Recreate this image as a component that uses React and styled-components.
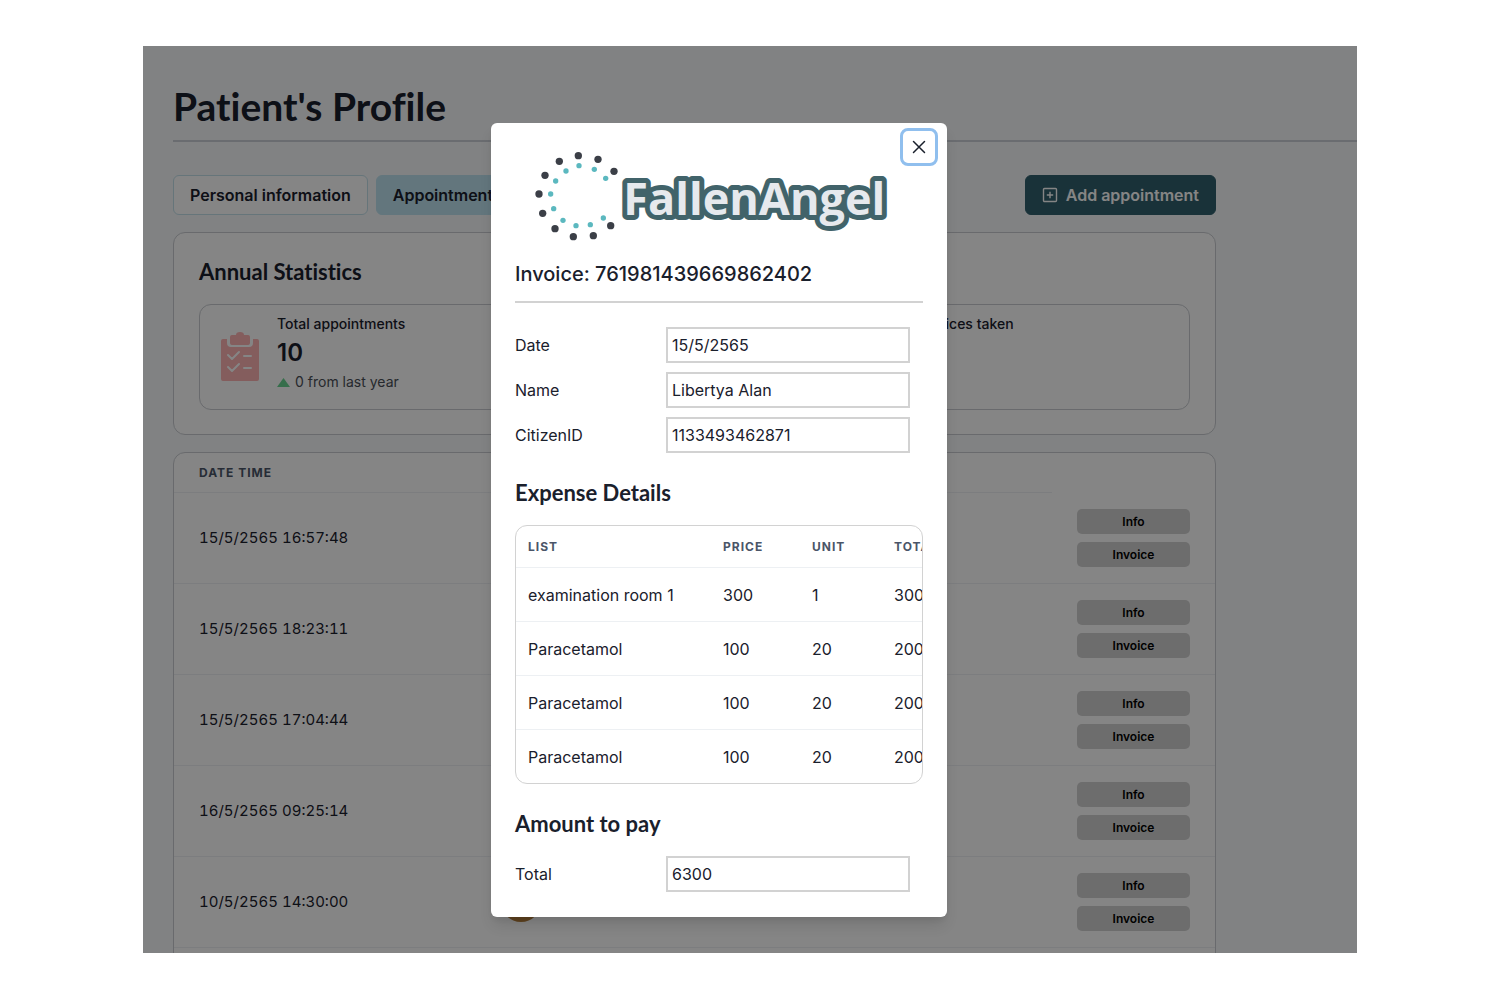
import React from "react";
import styled, { createGlobalStyle } from "styled-components";

const sans = `Inter, "Liberation Sans", sans-serif`;
const display = `Lato, "Noto Sans", sans-serif`;

const GlobalStyle = createGlobalStyle`
  *, *::before, *::after { box-sizing: border-box; }
  body { margin: 0; background: #fff; color: #1a202c; font-family: ${sans}; font-size: 16px; line-height: 24px; }
  h1, h2, p { margin: 0; }
  button, input { font: inherit; color: inherit; }
`;

const Stage = styled.div`
  height: 100vh;
  padding: 46px 143px 47px;
  display: flex;
`;

const Frame = styled.div`
  position: relative;
  flex: 1;
  overflow: hidden;
  background: #f7fafc;
`;

const Page = styled.main`
  padding: 30px 0 0 30px;
`;

const Title = styled.h1`
  font: 700 39px/60px ${display};
  font-variant-ligatures: none;
  padding-bottom: 4px;
  border-bottom: 2px solid #cbd0d6;
`;

const Content = styled.div`
  margin-right: 141px;
  padding-top: 33px;
  display: flex;
  flex-direction: column;
  gap: 17px;
`;

const Toolbar = styled.div`
  display: flex;
  gap: 8px;
`;

const ToolButton = styled.button`
  height: 40px;
  padding: 0 16px;
  display: flex;
  align-items: center;
  gap: 8px;
  border: 1px solid ${(p) => p.$border};
  border-radius: 6px;
  background: ${(p) => p.$fill};
  color: ${(p) => p.$ink || "#1a202c"};
  font-weight: 600;
  margin-left: ${(p) => (p.$end ? "auto" : 0)};
`;

const Card = styled.section`
  border: 1px solid #c9ccd1;
  border-radius: 12px;
  background: #fff;
`;

const StatsCard = styled(Card)`
  padding: 23px 25px 24px;
`;

const SectionTitle = styled.h2`
  font: 700 22px/32px ${display};
  font-variant-ligatures: none;
`;

const StatGroup = styled.div`
  display: flex;
  height: 106px;
  margin-top: 16px;
  border: 1px solid #c9ccd1;
  border-radius: 12px;
`;

const Stat = styled.div`
  flex: ${(p) => p.$grow} 1 0;
  display: flex;
  gap: 18px;
  padding: 8px 21px;
  white-space: nowrap;
`;

const StatIcon = styled.svg`
  width: 38px;
  height: 50px;
  margin-top: 19px;
`;

const StatLabel = styled.p`
  font-size: 14px;
  font-weight: 500;
  line-height: 22px;
`;

const StatValue = styled.p`
  font-size: 24px;
  font-weight: 600;
  line-height: 36px;
`;

const StatNote = styled.p`
  display: flex;
  align-items: center;
  gap: 5px;
  font-size: 14px;
  line-height: 22px;
  color: #4a4f57;
`;

const TableCard = styled(Card)`
  min-height: 540px;
  overflow: hidden;
`;

const Table = styled.table`
  width: 100%;
  border-collapse: separate;
  border-spacing: 0;
  table-layout: fixed;
`;

const HeadCell = styled.th`
  height: ${(p) => p.$height}px;
  padding: 0 ${(p) => p.$pad}px;
  width: ${(p) => (p.$width ? `${p.$width}px` : "auto")};
  border-bottom: ${(p) => (p.$bare ? "none" : "1px solid #edf0f3")};
  color: #4a5568;
  font-size: 12px;
  font-weight: 700;
  letter-spacing: 1px;
  text-align: left;
`;

const Cell = styled.td`
  height: ${(p) => p.$height}px;
  padding: 0 ${(p) => p.$pad}px;
  border-bottom: 1px solid #edf0f3;
  white-space: nowrap;
`;

const DateCell = styled(Cell)`
  font-size: 15px;
  font-variant-numeric: tabular-nums;
`;

const Avatar = styled.svg`
  display: block;
  width: 40px;
  height: 40px;
`;

const Actions = styled.div`
  display: flex;
  flex-direction: column;
  gap: 8px;
`;

const SmallButton = styled.button`
  height: 25px;
  padding: 0;
  border: 0;
  border-radius: 5px;
  background: #d1d1d1;
  color: #000;
  font-size: 12px;
  font-weight: 600;
`;

const Overlay = styled.div`
  position: absolute;
  inset: 0;
  display: flex;
  justify-content: center;
  align-items: flex-start;
  padding: 77px 62px 0 0;
  background: rgba(0, 0, 0, 0.48);
`;

const Dialog = styled.div`
  position: relative;
  width: 456px;
  max-width: 100%;
  padding: 22px 24px 25px;
  border-radius: 6px;
  background: #fff;
  box-shadow: 0 10px 15px -3px rgba(0, 0, 0, 0.12), 0 4px 6px -2px rgba(0, 0, 0, 0.06);
`;

const CloseButton = styled.button`
  position: absolute;
  top: 5px;
  right: 9px;
  width: 38px;
  height: 38px;
  padding: 0;
  display: grid;
  place-items: center;
  border: 3px solid #90bfee;
  border-radius: 8px;
  background: #fff;
`;

const Logo = styled.svg`
  display: block;
  width: 100%;
  height: 100px;
`;

const InvoiceTitle = styled.h2`
  font-size: 20px;
  font-weight: 500;
  line-height: 30px;
  padding: 14px 0 12px;
  border-bottom: 2px solid #d2d2d2;
`;

const Fields = styled.div`
  display: flex;
  flex-direction: column;
  gap: 9px;
  padding: ${(p) => p.$top}px 13px 0 0;
`;

const Field = styled.div`
  display: flex;
  align-items: center;

  label { flex: 1; }
  input {
    width: 244px;
    height: 36px;
    padding: 0 4px;
    border: 2px solid #d2d2d2;
    background: #fff;
  }
`;

const DialogSection = styled(SectionTitle)`
  margin-top: 24px;
`;

const ExpenseBox = styled.div`
  height: 259px;
  margin-top: 16px;
  overflow: hidden;
  border: 1px solid #d2d2d2;
  border-radius: 12px;
`;

const ExpenseTable = styled(Table)`
  width: 478px;
`;

const ROWS = ["15/5/2565 16:57:48", "15/5/2565 18:23:11", "15/5/2565 17:04:44", "16/5/2565 09:25:14", "10/5/2565 14:30:00"];

const FIELDS = [
  ["date", "Date", "15/5/2565"],
  ["name", "Name", "Libertya Alan"],
  ["citizen", "CitizenID", "1133493462871"],
];

const EXPENSES = [
  ["examination room 1", 300, 1, 300],
  ["Paracetamol", 100, 20, 2000],
  ["Paracetamol", 100, 20, 2000],
  ["Paracetamol", 100, 20, 2000],
];

const OUTER_DOTS = [[265, 107], [324, 118], [372, 154], [208, 124], [165, 166], [147, 222], [158, 280], [195, 326], [250, 350], [310, 347], [362, 317]];
const INNER_DOTS = [[267, 137], [313, 148], [347, 175], [228, 153], [197, 183], [182, 222], [191, 266], [219, 301], [258, 317], [301, 314], [340, 294]];

function ClipboardIcon() {
  return (
    <StatIcon viewBox="0 0 38 50" aria-hidden="true">
      <path fill="#feb2b2" d="M2 7h4v4a4 4 0 0 0 4 4h18a4 4 0 0 0 4-4V7h4a2 2 0 0 1 2 2v38a2 2 0 0 1-2 2H2a2 2 0 0 1-2-2V9a2 2 0 0 1 2-2Z" />
      <path fill="#feb2b2" d="M9 5a2 2 0 0 1 2-2h4a4 3 0 0 1 8 0h4a2 2 0 0 1 2 2v6a2 2 0 0 1-2 2H11a2 2 0 0 1-2-2Z" />
      <path fill="none" stroke="#fff" strokeWidth="2" strokeLinecap="round" strokeLinejoin="round" d="m7 23 4 4 7-7M7 35l4 4 7-7M23 24h7M23 36h7" />
    </StatIcon>
  );
}

function BrandLogo() {
  return (
    <Logo viewBox="75 75 1224 300" role="img" aria-label="FallenAngel">
      {OUTER_DOTS.map(([x, y]) => <circle key={`${x}-${y}`} cx={x} cy={y} r="11" fill="#3b3f47" />)}
      {INNER_DOTS.map(([x, y]) => <circle key={`${x}-${y}`} cx={x} cy={y} r="8" fill="#5bb8bf" />)}
      <text x="400" y="285" fontFamily="'Open Sans', 'Noto Sans', sans-serif" fontWeight="700" fontSize="135" fill="#e6e9ed" stroke="#41636a" strokeWidth="30" strokeLinejoin="round" paintOrder="stroke">
        FallenAngel
      </text>
    </Logo>
  );
}

export default function App() {
  return (
    <Stage>
      <GlobalStyle />
      <Frame>
        <Page>
          <Title>Patient's Profile</Title>
          <Content>
            <Toolbar>
              <ToolButton $fill="#fff" $border="#c4e0ea">Personal information</ToolButton>
              <ToolButton $fill="#bee3f0" $border="#bee3f0">Appointments</ToolButton>
              <ToolButton $end $fill="#31606e" $border="#31606e" $ink="#fff">
                <svg width="16" height="16" viewBox="0 0 16 16" fill="none" stroke="currentColor" strokeWidth="1.4" aria-hidden="true">
                  <rect x="1.5" y="1.5" width="13" height="13" rx="1" />
                  <path d="M8 4.8v6.4M4.8 8h6.4" />
                </svg>
                Add appointment
              </ToolButton>
            </Toolbar>
            <StatsCard>
              <SectionTitle>Annual Statistics</SectionTitle>
              <StatGroup>
                <Stat $grow={18}>
                  <ClipboardIcon />
                  <div>
                    <StatLabel>Total appointments</StatLabel>
                    <StatValue>10</StatValue>
                    <StatNote>
                      <svg width="13" height="9" viewBox="0 0 13 9" aria-hidden="true"><path d="M6.500 0 13 9H0Z" fill="#68d391" /></svg>
                      0 from last year
                    </StatNote>
                  </div>
                </Stat>
                <Stat $grow={7}>
                  <StatLabel>Services taken</StatLabel>
                </Stat>
              </StatGroup>
            </StatsCard>
            <TableCard>
              <Table>
                <thead>
                  <tr>
                    <HeadCell $height={40} $pad={25} $width={302}>DATE TIME</HeadCell>
                    <HeadCell $height={40} $pad={25} />
                    <HeadCell $height={40} $pad={25} $width={163} $bare />
                  </tr>
                </thead>
                <tbody>
                  {ROWS.map((when) => (
                    <tr key={when}>
                      <DateCell $height={91} $pad={25}>{when}</DateCell>
                      <Cell $height={91} $pad={25}>
                        <Avatar viewBox="0 0 40 40" aria-hidden="true">
                          <circle cx="20" cy="20" r="20" fill="#b57f3c" />
                        </Avatar>
                      </Cell>
                      <Cell $height={91} $pad={25}>
                        <Actions>
                          <SmallButton>Info</SmallButton>
                          <SmallButton>Invoice</SmallButton>
                        </Actions>
                      </Cell>
                    </tr>
                  ))}
                </tbody>
              </Table>
            </TableCard>
          </Content>
        </Page>
        <Overlay>
          <Dialog role="dialog" aria-modal="true" aria-labelledby="invoice-title">
            <CloseButton aria-label="Close">
              <svg width="14" height="14" viewBox="0 0 14 14" fill="none" stroke="#1a202c" strokeWidth="1.5" strokeLinecap="round" aria-hidden="true">
                <path d="M1.500 1.500 12.500 12.500M12.500 1.500 1.500 12.500" />
              </svg>
            </CloseButton>
            <BrandLogo />
            <InvoiceTitle id="invoice-title">Invoice: 761981439669862402</InvoiceTitle>
            <Fields $top={24}>
              {FIELDS.map(([id, label, value]) => (
                <Field key={id}>
                  <label htmlFor={id}>{label}</label>
                  <input id={id} defaultValue={value} />
                </Field>
              ))}
            </Fields>
            <DialogSection>Expense Details</DialogSection>
            <ExpenseBox>
              <ExpenseTable>
                <thead>
                  <tr>
                    <HeadCell $height={42} $pad={12} $width={195}>LIST</HeadCell>
                    <HeadCell $height={42} $pad={12} $width={89}>PRICE</HeadCell>
                    <HeadCell $height={42} $pad={12} $width={82}>UNIT</HeadCell>
                    <HeadCell $height={42} $pad={12}>TOTAL</HeadCell>
                  </tr>
                </thead>
                <tbody>
                  {EXPENSES.map((row, i) => (
                    <tr key={i}>
                      {row.map((value, j) => <Cell key={j} $height={54} $pad={12}>{value}</Cell>)}
                    </tr>
                  ))}
                </tbody>
              </ExpenseTable>
            </ExpenseBox>
            <DialogSection>Amount to pay</DialogSection>
            <Fields $top={16}>
              <Field>
                <label htmlFor="total">Total</label>
                <input id="total" defaultValue="6300" />
              </Field>
            </Fields>
          </Dialog>
        </Overlay>
      </Frame>
    </Stage>
  );
}
